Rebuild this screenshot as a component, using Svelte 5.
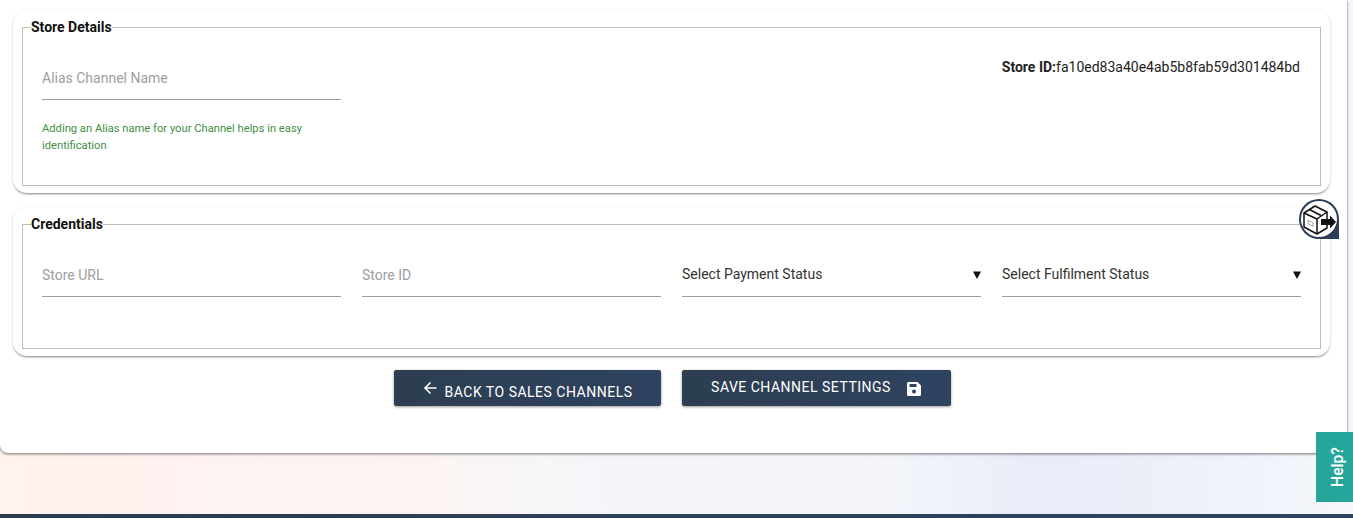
<script lang="ts">
	const credentials = ['Store URL', 'Store ID'];
	const selects = ['Select Payment Status', 'Select Fulfilment Status'];
</script>

<div class="page">
	<div class="panel">
		<section class="card first">
			<fieldset>
				<legend>Store Details</legend>
				<div class="details">
					<div class="alias">
						<div class="field"><span class="placeholder">Alias Channel Name</span></div>
						<p class="hint">Adding an Alias name for your Channel helps in easy identification</p>
					</div>
					<div class="store-id"><b>Store ID:</b>fa10ed83a40e4ab5b8fab59d301484bd</div>
				</div>
			</fieldset>
		</section>

		<section class="card second">
			<fieldset>
				<legend>Credentials</legend>
				<div class="grid">
					{#each credentials as label}
						<div class="field"><span class="placeholder">{label}</span></div>
					{/each}
					{#each selects as label}
						<div class="field select">
							<span>{label}</span>
							<svg class="caret" width="8" height="8" viewBox="0 0 8 8"><path d="M0 .5h8L4 8z" fill="#111" /></svg>
						</div>
					{/each}
				</div>
			</fieldset>
		</section>

		<div class="actions">
			<button class="btn back">
				<svg width="16" height="16" viewBox="0 0 16 16" fill="none" stroke="#fff" stroke-width="1.600">
					<path d="M14.500 8H3M8.500 2.500 3 8 8.500 13.500" />
				</svg>
				<span>Back to Sales Channels</span>
			</button>
			<button class="btn save">
				<span>Save Channel Settings</span>
				<svg width="14" height="14" viewBox="0 0 14 14">
					<path fill="#fff" fill-rule="evenodd" d="M1.500 0H10.500L14 3.500V12.500A1.500 1.500 0 0 1 12.500 14H1.500A1.500 1.500 0 0 1 0 12.500V1.500A1.500 1.500 0 0 1 1.500 0ZM2.500 2V5H9.500V2ZM7 7.500A2 2 0 1 0 7 11.500 2 2 0 1 0 7 7.500Z" />
				</svg>
			</button>
		</div>
	</div>

	<div class="footer"></div>

	<div class="float-icon">
		<div class="disc">
			<svg width="36" height="36" viewBox="0 0 36 36" fill="none" stroke="#111" stroke-width="1.500" stroke-linejoin="round">
				<path d="M3 12 14 5 26 11 16 18Z" />
				<path d="M3 12V26L16 33 26 27V11" />
				<path d="M16 18V33" />
				<path d="M8.500 8.500 20 14.500" />
				<path d="M7 19l5 3v3.500l-5-3z" stroke-width="0.800" stroke="#888" />
				<path d="M20 18h9v-3.500l6 6.500-6 6.500V24h-9z" fill="#111" stroke="none" />
			</svg>
		</div>
	</div>

	<div class="help"><span>Help?</span></div>
</div>

<style>
	:global(body) {
		margin: 0;
		overflow: hidden;
	}

	.page {
		position: relative;
		width: 1353px;
		height: 518px;
		overflow: hidden;
		font-family: Roboto, 'Liberation Sans', sans-serif;
		font-size: 14px;
		color: #212529;
		background: linear-gradient(90deg, #fff2ef 0%, #fdf4f1 29%, #f6f6f9 42%, #f3f5fb 66%, #e9edf8 76%, #ebeef8 83%, #f5f7fc 100%);
		display: flex;
		flex-direction: column;
		justify-content: space-between;
	}

	.panel {
		box-sizing: border-box;
		width: 1347px;
		height: 453px;
		background: #fff;
		border-radius: 0 0 8px 8px;
		box-shadow: 0 1px 3px rgba(0, 0, 0, 0.55);
		padding: 10px 17px 0 13px;
	}

	.card {
		box-sizing: border-box;
		background: #fff;
		border-radius: 14px;
		padding: 7px 9px;
		box-shadow: 0 2px 2px -1px rgba(0, 0, 0, 0.35), 0 1px 3px rgba(0, 0, 0, 0.18);
	}

	.card.first {
		height: 183px;
		margin-bottom: 14px;
	}

	.card.second {
		height: 149px;
	}

	fieldset {
		box-sizing: border-box;
		height: 100%;
		margin: 0;
		padding: 0;
		border: 1px solid #bdbdbd;
		min-width: 0;
	}

	legend {
		padding: 0;
		margin-left: 8px;
		font-size: 14px;
		font-weight: 700;
		line-height: 20px;
		color: #111;
	}

	.details {
		display: flex;
		justify-content: space-between;
		align-items: flex-start;
		padding: 11px 20px 0 19px;
	}

	.alias {
		width: 299px;
	}

	.field {
		box-sizing: border-box;
		display: flex;
		align-items: center;
		justify-content: space-between;
		height: 52px;
		padding-top: 9px;
		border-bottom: 1px solid #9e9e9e;
		color: #333;
	}

	.placeholder {
		color: #9e9e9e;
	}

	.hint {
		margin: 20px 0 0;
		font-size: 11.2px;
		line-height: 17px;
		color: #3f8f46;
	}

	.store-id {
		margin-top: 9px;
		line-height: 20px;
		color: #222;
	}

	.store-id b {
		font-weight: 700;
	}

	.grid {
		display: grid;
		grid-template-columns: repeat(4, 298.5px);
		column-gap: 21.5px;
		padding: 11px 0 0 19px;
	}

	.select span {
		margin-top: -3px;
	}

	.caret {
		margin-top: -1px;
	}

	.actions {
		display: flex;
		gap: 21px;
		padding: 14px 0 0 381px;
	}

	.btn {
		display: flex;
		align-items: center;
		justify-content: center;
		height: 36px;
		border: 0;
		border-radius: 2px;
		background: linear-gradient(90deg, #2c3e50, #2f4260);
		color: #fff;
		font: 400 14px Roboto, 'Liberation Sans', sans-serif;
		letter-spacing: 0.5px;
		text-transform: uppercase;
		box-shadow: 0 1px 3px rgba(0, 0, 0, 0.4);
	}

	.back {
		width: 267px;
		gap: 6px;
	}

	.back span {
		margin-top: 8px;
	}

	.back svg {
		margin-top: -1px;
	}

	.save {
		width: 269px;
		gap: 16px;
		padding-right: 7px;
	}

	.save span {
		margin-top: -2px;
	}

	.save svg {
		margin-top: 1px;
	}

	.footer {
		height: 4px;
		background: linear-gradient(90deg, #2c3e50, #2f4260);
	}

	.float-icon {
		position: absolute;
		left: 1299px;
		top: 199px;
		box-sizing: border-box;
		width: 40px;
		height: 40px;
		padding: 2px;
		background: #2c3e57;
		border-radius: 50% 50% 0 50%;
	}

	.disc {
		width: 36px;
		height: 36px;
		background: #fff;
		border-radius: 50%;
	}

	.disc svg {
		display: block;
	}

	.help {
		position: absolute;
		right: 0;
		top: 432px;
		box-sizing: border-box;
		width: 37px;
		height: 70px;
		padding-left: 6px;
		display: flex;
		align-items: center;
		justify-content: center;
		background: #26a69a;
		color: #fff;
		font-size: 15.6px;
		font-weight: 500;
	}

	.help span {
		display: block;
		transform: rotate(-90deg);
		white-space: nowrap;
	}
</style>
